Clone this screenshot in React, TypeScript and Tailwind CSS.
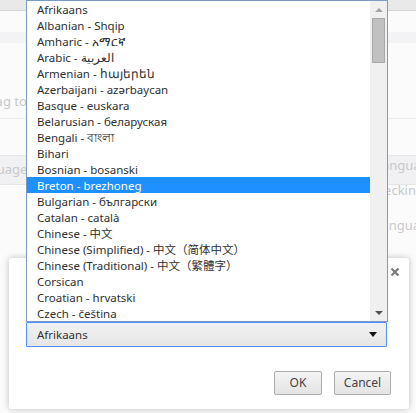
import React from 'react';

const LANGUAGES = [
  'Afrikaans',
  'Albanian - Shqip',
  'Amharic - አማርኛ',
  'Arabic - العربية',
  'Armenian - հայերեն',
  'Azerbaijani - azərbaycan',
  'Basque - euskara',
  'Belarusian - беларуская',
  'Bengali - বাংলা',
  'Bihari',
  'Bosnian - bosanski',
  'Breton - brezhoneg',
  'Bulgarian - български',
  'Catalan - català',
  'Chinese - 中文',
  'Chinese (Simplified) - 中文（简体中文）',
  'Chinese (Traditional) - 中文（繁體字）',
  'Corsican',
  'Croatian - hrvatski',
  'Czech - čeština',
];

const SELECTED = 'Breton - brezhoneg';

const FONT = "font-['Segoe_UI','Noto_Sans','Noto_Sans_CJK_SC',sans-serif]";

/** 배경 설정 페이지 (흐리게 보이는 부분) */
function BackgroundPage() {
  return (
    <div className="flex flex-col text-[13px] text-[#c9c9cc]">
      <div className="h-[11px] bg-[#e9e9ea] border-b border-[#d6d6d8]" />
      <div className="h-[21px]" />
      <div className="h-[11px] bg-[#f3f3f5]" />
      <div className="h-[49px]" />
      <div className="h-[26px] flex items-center justify-between">
        <span className="-ml-[19px] -mt-[6px]">Drag to</span>
      </div>
      <div className="h-[1px] bg-[#ececef]" />
      <div className="h-[36px]" />
      <div className="h-[30px] bg-[#f1f1f3] border-y border-[#e6e6e8] flex items-center justify-between">
        <span className="-ml-[30px]">languages)</span>
        <span className="-mr-[20px] pb-[8px]">Language</span>
      </div>
      <div className="h-[26px] flex items-center justify-end">
        <span className="-mr-[8px] -mt-[14px]">Checking</span>
      </div>
      <div className="h-[30px] flex items-center justify-end">
        <span className="-mr-[12px]">Languag</span>
      </div>
    </div>
  );
}

function Scrollbar() {
  return (
    <div className="w-[17px] h-full bg-[#f0f0f0] flex flex-col items-center">
      <div className="h-[17px] flex items-center justify-center">
        <div className="w-0 h-0 border-x-[4px] border-x-transparent border-b-[4px] border-b-[#a3a3a3]" />
      </div>
      <div className="w-[13px] h-[45px] bg-[#c1c1c1] border border-[#a8a8a8]" />
      <div className="flex-1" />
      <div className="h-[17px] flex items-center justify-center">
        <div className="w-0 h-0 border-x-[4px] border-x-transparent border-t-[4px] border-t-[#505050]" />
      </div>
    </div>
  );
}

export default function App() {
  return (
    <div className={`relative w-[416px] h-[413px] overflow-hidden bg-[#fbfbfc] ${FONT}`}>
      <BackgroundPage />

      {/* 대화상자 */}
      <div className="absolute left-[9px] top-[258px] w-[400px] h-[151px] bg-white rounded-[3px] shadow-[0_0_6px_rgba(0,0,0,0.25)] flex flex-col">
        <div className="flex justify-end pt-[9px] pr-[9px]">
          <svg width="10" height="10" viewBox="0 0 10 10">
            <path d="M1.5 1.5 L8.5 8.5 M8.5 1.5 L1.5 8.5" stroke="#7a7a7a" strokeWidth="2.2" />
          </svg>
        </div>
        <div className="h-[45px]" />
        <div className="mx-[17px] w-[361px] h-[25px] border border-[#4d90fe] rounded-[1px] bg-gradient-to-b from-[#f1f1f1] to-[#e6e6e6] flex items-center justify-between pl-[10px] pr-[9px] text-[11.5px] text-[#333]">
          <span>Afrikaans</span>
          <div className="w-0 h-0 border-x-[4px] border-x-transparent border-t-[5px] border-t-[#111]" />
        </div>
        <div className="flex-1" />
        <div className="flex justify-end gap-[12px] pr-[18px] pb-[14px] text-[12px] text-[#444]">
          <button className="w-[48px] h-[24px] border border-[#acacac] rounded-[2px] bg-gradient-to-b from-[#f4f4f4] to-[#e4e4e4]">
            OK
          </button>
          <button className="w-[57px] h-[24px] border border-[#acacac] rounded-[2px] bg-gradient-to-b from-[#f4f4f4] to-[#e4e4e4]">
            Cancel
          </button>
        </div>
      </div>

      {/* 열린 드롭다운 목록 */}
      <div className="absolute left-[26px] top-0 w-[362px] h-[322px] bg-white border border-[#7a9cc0] flex">
        <ul className="flex-1 overflow-hidden text-[11.5px] text-[#2f2f2f]">
          {LANGUAGES.map((lang) => (
            <li
              key={lang}
              className={`h-[16px] leading-[17px] pl-[10px] whitespace-nowrap ${
                lang === SELECTED ? 'bg-[#1e90ff] text-white' : ''
              }`}
            >
              {lang}
            </li>
          ))}
        </ul>
        <Scrollbar />
      </div>
    </div>
  );
}
